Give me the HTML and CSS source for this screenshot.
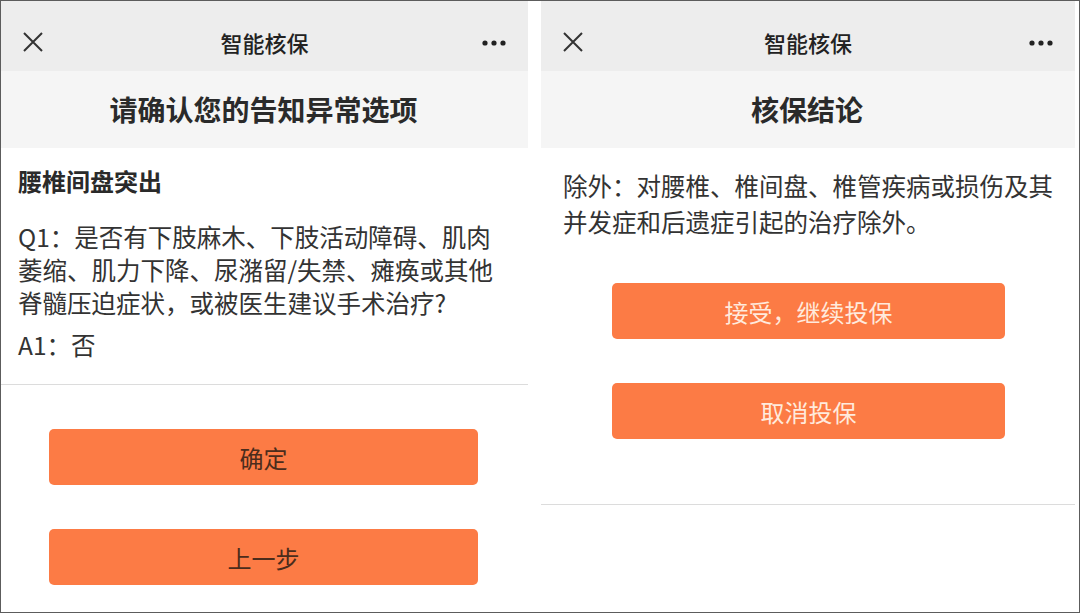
FILE: index.html
```html
<!DOCTYPE html>
<html lang="zh-CN">
<head>
<meta charset="utf-8">
<title>智能核保</title>
<link rel="stylesheet" href="styles.css">
</head>
<body>
<div class="frame">
  <section class="panel panel-left">
    <header class="nav">
      <svg class="nav-close" width="20" height="20" viewBox="0 0 20 20"><path d="M1 1 L19 19 M19 1 L1 19" stroke="#333" stroke-width="2" fill="none"/></svg>
      <div class="nav-title">智能核保</div>
      <svg class="nav-more" width="24" height="6" viewBox="0 0 24 6"><circle cx="3" cy="3" r="2.6" fill="#222"/><circle cx="12" cy="3" r="2.6" fill="#222"/><circle cx="21" cy="3" r="2.6" fill="#222"/></svg>
    </header>
    <div class="page-title">请确认您的告知异常选项</div>
    <div class="content-left">
      <h2 class="item-head">腰椎间盘突出</h2>
      <p class="qa">Q1：是否有下肢麻木、下肢活动障碍、肌肉<br>萎缩、肌力下降、尿潴留/失禁、瘫痪或其他<br>脊髓压迫症状，或被医生建议手术治疗?</p>
      <p class="qa answer">A1：否</p>
    </div>
    <div class="btns btns-left">
      <div class="btn btn-dark">确定</div>
      <div class="btn btn-dark">上一步</div>
    </div>
  </section>
  <section class="panel panel-right">
    <header class="nav">
      <svg class="nav-close" width="20" height="20" viewBox="0 0 20 20"><path d="M1 1 L19 19 M19 1 L1 19" stroke="#333" stroke-width="2" fill="none"/></svg>
      <div class="nav-title">智能核保</div>
      <svg class="nav-more" width="24" height="6" viewBox="0 0 24 6"><circle cx="3" cy="3" r="2.6" fill="#222"/><circle cx="12" cy="3" r="2.6" fill="#222"/><circle cx="21" cy="3" r="2.6" fill="#222"/></svg>
    </header>
    <div class="page-title">核保结论</div>
    <div class="content-right">
      <p class="conclusion">除外：对腰椎、椎间盘、椎管疾病或损伤及其<br>并发症和后遗症引起的治疗除外。</p>
      <div class="btns btns-right">
        <div class="btn btn-light">接受，继续投保</div>
        <div class="btn btn-light">取消投保</div>
      </div>
    </div>
  </section>
</div>
</body>
</html>
```
FILE: styles.css
```css
* { box-sizing: border-box; }
html, body { margin: 0; padding: 0; background: #fff; }
body {
  font-family: "Noto Sans CJK SC", "Noto Sans", sans-serif;
  color: #333;
}
.frame {
  width: 1080px;
  height: 613px;
  border: 1px solid #5c5c5c;
  display: flex;
  gap: 13px;
  overflow: hidden;
  background: #fff;
}
.panel {
  display: flex;
  flex-direction: column;
  background: #fff;
}
.panel-left { width: 527px; }
.panel-right { width: 534px; }

.nav {
  height: 70px;
  background: #ededed;
  display: flex;
  align-items: center;
  justify-content: space-between;
  padding: 12px 22px 0 22px;
  position: relative;
}
.nav-close { display: block; }
.nav-title {
  font-size: 22px;
  font-weight: 500;
  color: #222;
  position: absolute;
  left: 0; right: 0;
  text-align: center;
  top: 25px;
  line-height: 32px;
  pointer-events: none;
}
.nav-more { display: block; margin-top: 1px; }

.page-title {
  height: 77px;
  background: #f5f5f5;
  display: flex;
  align-items: center;
  justify-content: center;
  font-size: 28px;
  font-weight: 700;
  color: #2a2a2a;
  padding-bottom: 2px;
  padding-right: 2px;
}

.content-left {
  padding: 17px 17px 23px 17px;
  border-bottom: 1px solid #dcdcdc;
}
.item-head {
  margin: 0;
  font-size: 24px;
  line-height: 32px;
  font-weight: 700;
  color: #2a2a2a;
}
.qa {
  margin: 23px 0 0 0;
  font-size: 24.5px;
  line-height: 33px;
  color: #333;
}
.qa.answer { margin-top: 9px; }

.btns {
  display: flex;
  flex-direction: column;
  gap: 44px;
}
.btns-left { padding: 44px 50px 0 48px; }
.btn {
  height: 56px;
  border-radius: 5px;
  background: #fc7b45;
  display: flex;
  align-items: center;
  justify-content: center;
  font-size: 24px;
}
.btn-dark { color: #4b2c1c; }
.btn-light { color: #ffeadd; }

.content-right {
  border-bottom: 1px solid #dcdcdc;
  padding-bottom: 65px;
}
.conclusion {
  margin: 0;
  padding: 20px 10px 0 22px;
  font-size: 24.5px;
  line-height: 36px;
  color: #333;
}
.btns-right { padding: 43px 0 0 71px; width: 464px; }
```
